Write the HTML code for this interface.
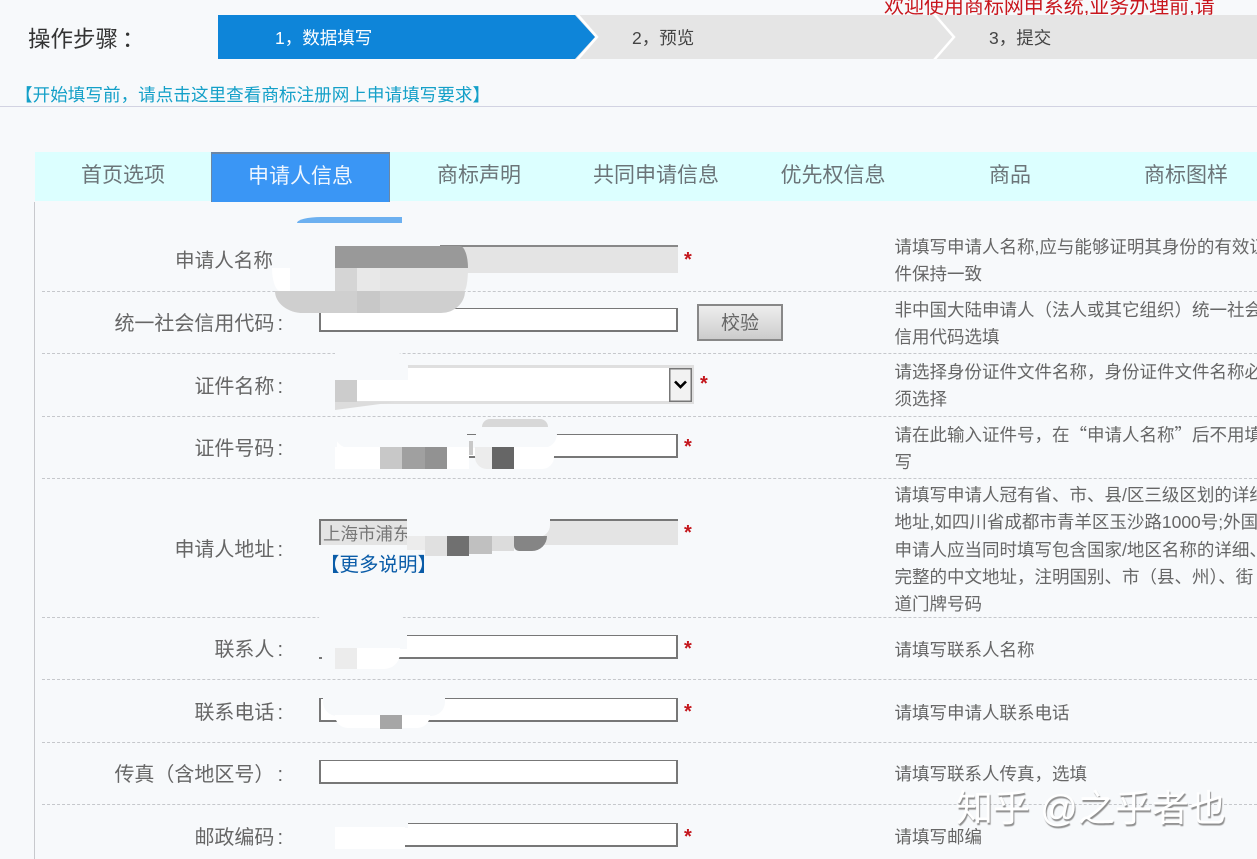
<!DOCTYPE html>
<html lang="zh-CN"><head><meta charset="utf-8"><title>商标网申</title>
<style>
html,body{margin:0;padding:0;width:1257px;height:859px;overflow:hidden;background:#f7f9fb}
body{position:relative;font-family:"Liberation Sans","Noto Sans CJK SC",sans-serif;color:#666}
.a,.t,.l,.h,.d,.i,.s{position:absolute}
.t,.l,.h{white-space:nowrap;height:30px;line-height:30px}
.l{right:974px;font-size:20px;color:#666;text-align:right}
.l span{margin-left:3px}
.h{left:894.5px;font-size:17.5px;color:#666}
.h span{font-family:"Noto Sans CJK SC",sans-serif}
.d{left:42px;width:1215px;height:0;border-top:1px dashed #c6c8cc}
.i{left:319px;width:355px;height:21px;background:#fff;border:2px solid #777;border-width:1px 2px 2px 2px}
.s{color:#c4161c;font-size:20px;line-height:20px;height:20px;font-weight:bold}
.tab{position:absolute;top:152px;height:50px;line-height:48px;font-size:21px;color:#6b7478;text-align:center;white-space:nowrap}
</style></head><body>

<div class="t" style="left:884px;top:-8px;font-size:20px;color:#c8161d;height:30px;letter-spacing:-.03px">欢迎使用商标网申系统,业务办理前,请</div>
<svg class="a" style="left:218px;top:15px" width="1039" height="44" viewBox="0 0 1039 44">
<rect x="340" width="699" height="44" fill="#e5e5e5"/>
<polygon points="0,0 357,0 377,22 357,44 0,44" fill="#0e85d9"/>
<polyline points="359,-1 379,22 359,45" fill="none" stroke="#fff" stroke-width="2.5"/>
<polyline points="716,-1 736,22 716,45" fill="none" stroke="#fff" stroke-width="2.5"/>
</svg>
<div class="t" style="left:28px;top:25px;font-size:22.5px;color:#333">操作步骤<span style="margin-left:4px">：</span></div>
<div class="t" style="left:275px;top:23px;font-size:17.5px;color:#fff">1，数据填写</div>
<div class="t" style="left:632px;top:23px;font-size:17.5px;color:#444">2，预览</div>
<div class="t" style="left:989px;top:23px;font-size:17.5px;color:#444">3，提交</div>
<div class="t" style="left:15px;top:80px;font-size:17.6px;color:#14a0c8">【开始填写前，请点击这里查看商标注册网上申请填写要求】</div>
<div class="a" style="left:0;top:106px;width:1257px;height:1px;background:#d2d3e2"></div>

<div class="a" style="left:35px;top:152px;width:1222px;height:49px;background:#dcffff"></div>
<div class="tab" style="left:35px;width:176px">首页选项</div>
<div class="tab" style="left:211px;width:179px;background:#3a96f5;color:#eef6ff;box-shadow:inset 0 2px 0 #6b87a5,inset 1px 0 0 #6b87a5,inset -1px 0 0 #6b87a5;line-height:49px">申请人信息</div>
<div class="tab" style="left:390px;width:178px">商标声明</div>
<div class="tab" style="left:568px;width:176px">共同申请信息</div>
<div class="tab" style="left:744px;width:178px">优先权信息</div>
<div class="tab" style="left:922px;width:176px">商品</div>
<div class="tab" style="left:1098px;width:176px">商标图样</div>
<div class="a" style="left:34px;top:202px;width:1px;height:657px;background:#c8c9cd"></div>

<div class="d" style="top:291px"></div><div class="d" style="top:353px"></div><div class="d" style="top:416px"></div><div class="d" style="top:478px"></div><div class="d" style="top:617px"></div><div class="d" style="top:679px"></div><div class="d" style="top:742px"></div><div class="d" style="top:804px"></div>

<div class="l" style="top:246px;right:984px;font-size:19.6px">申请人名称</div>
<div class="l" style="top:309px">统一社会信用代码<span>:</span></div>
<div class="l" style="top:372px">证件名称<span>:</span></div>
<div class="l" style="top:434px">证件号码<span>:</span></div>
<div class="l" style="top:535px">申请人地址<span>:</span></div>
<div class="l" style="top:635px">联系人<span>:</span></div>
<div class="l" style="top:698px">联系电话<span>:</span></div>
<div class="l" style="top:760px">传真（含地区号）<span>:</span></div>
<div class="l" style="top:823px">邮政编码<span>:</span></div>

<div class="h" style="top:232px">请填写申请人名称,应与能够证明其身份的有效证</div>
<div class="h" style="top:259px">件保持一致</div>
<div class="h" style="top:295px">非中国大陆申请人（法人或其它组织）统一社会</div>
<div class="h" style="top:322px">信用代码选填</div>
<div class="h" style="top:357px">请选择身份证件文件名称，身份证件文件名称必</div>
<div class="h" style="top:384px">须选择</div>
<div class="h" style="top:420px">请在此输入证件号，在<span>“</span>申请人名称<span>”</span>后不用填</div>
<div class="h" style="top:447px">写</div>
<div class="h" style="top:480px">请填写申请人冠有省、市、县/区三级区划的详细</div>
<div class="h" style="top:507px">地址,如四川省成都市青羊区玉沙路1000号;外国</div>
<div class="h" style="top:535px">申请人应当同时填写包含国家/地区名称的详细、</div>
<div class="h" style="top:562px">完整的中文地址，注明国别、市（县、州）、街</div>
<div class="h" style="top:589px">道门牌号码</div>
<div class="h" style="top:635px">请填写联系人名称</div>
<div class="h" style="top:698px">请填写申请人联系电话</div>
<div class="h" style="top:759px">请填写联系人传真，选填</div>
<div class="h" style="top:822px">请填写邮编</div>

<!-- row 1 -->
<div class="a" style="left:297px;top:217px;width:105px;height:6px;background:#6cb0f0;border-radius:24px 0 0 0/6px 0 0 0"></div>
<div class="a" style="left:440px;top:245px;width:238px;height:28px;background:#e4e4e4;border-top:2px solid #888;box-sizing:border-box"></div>
<div class="a" style="left:335px;top:246px;width:133px;height:22px;background:#999;border-radius:0 8px 0 0/0 22px 0 0"></div>
<div class="a" style="left:272px;top:268px;width:18px;height:23px;background:#fff;border-radius:0 0 0 8px/0 0 0 23px"></div>
<div class="a" style="left:335px;top:268px;width:22px;height:23px;background:#d5d5d5"></div>
<div class="a" style="left:357px;top:268px;width:23px;height:23px;background:#e8e8e8"></div>
<div class="a" style="left:380px;top:268px;width:88px;height:23px;background:#e4e4e4;border-radius:0 0 4px 0/0 0 23px 0"></div>

<!-- row 2 -->
<div class="i" style="top:308px"></div>
<div class="a" style="left:275px;top:291px;width:190px;height:22px;background:#cfcfcf;border-radius:0 0 24px 28px/0 0 22px 22px"></div>
<div class="a" style="left:357px;top:291px;width:23px;height:22px;background:#c8c8c8"></div>
<div class="a" style="left:697px;top:304px;width:86px;height:37px;box-sizing:border-box;border:2px solid #888;background:linear-gradient(#eeeeee,#cccccc);text-align:center;line-height:36px;font-size:19px;color:#666">校验</div>
<div class="s" style="left:684px;top:250px">*</div>

<!-- row 3 -->
<div class="a" style="left:335px;top:365px;width:359px;height:39px;box-sizing:border-box;background:#fff;border:3px solid #dfdfdf;border-left:0"></div>
<div class="a" style="left:335px;top:352px;width:73px;height:28px;background:#f7f9fb;border-radius:0 14px 0 0"></div>
<div class="a" style="left:335px;top:380px;width:22px;height:22px;background:#ccc"></div>
<svg class="a" style="left:669px;top:368px" width="23" height="34" viewBox="0 0 23 34"><rect x=".75" y=".75" width="21.5" height="32.5" fill="#f2f2f2" stroke="#777" stroke-width="1.5"/><polyline points="6,13.5 11.5,19 17,13.5" fill="none" stroke="#000" stroke-width="2.6"/></svg>
<div class="a" style="left:335px;top:402px;width:60px;height:8px;background:#dcdcdc;clip-path:polygon(0 0,100% 0,0 100%)"></div>
<div class="s" style="left:700px;top:374px">*</div>

<!-- row 4 -->
<div class="i" style="top:434px"></div>
<div class="a" style="left:315px;top:430px;width:22px;height:32px;background:#f7f9fb"></div>
<div class="a" style="left:335px;top:418px;width:222px;height:30px;background:#f7f9fb;border-radius:14px"></div>
<div class="a" style="left:467px;top:434px;width:9px;height:1px;background:#777"></div>
<div class="a" style="left:469px;top:441px;width:4px;height:14px;background:#c8c8c8"></div>
<div class="a" style="left:335px;top:447px;width:45px;height:22px;background:#fff"></div>
<div class="a" style="left:380px;top:447px;width:22px;height:22px;background:#c8c8c8"></div>
<div class="a" style="left:402px;top:447px;width:23px;height:22px;background:#a0a0a0"></div>
<div class="a" style="left:425px;top:447px;width:22px;height:22px;background:#929292"></div>
<div class="a" style="left:447px;top:447px;width:22px;height:22px;background:#fff"></div>
<div class="a" style="left:475px;top:447px;width:17px;height:22px;background:#ececec;border-radius:0 0 0 12px"></div>
<div class="a" style="left:492px;top:447px;width:22px;height:22px;background:#666"></div>
<div class="a" style="left:514px;top:447px;width:40px;height:22px;background:#fff;border-radius:0 0 12px 0"></div>
<div class="a" style="left:482px;top:419px;width:66px;height:8px;background:#d8d8d8;border-radius:12px 12px 0 0"></div>
<div class="s" style="left:684px;top:437px">*</div>

<!-- row 5 -->
<div class="a" style="left:319px;top:519px;width:359px;height:26px;box-sizing:border-box;background:#e4e4e4;border-top:2px solid #777;border-left:2px solid #777;font-size:17.5px;line-height:26px;padding-left:2px;color:#777;white-space:nowrap">上海市浦东</div>
<div class="t" style="left:320px;top:550px;font-size:19.5px;color:#0a5ca8">【更多说明】</div>
<div class="a" style="left:407px;top:490px;width:143px;height:47px;background:#f7f9fb;border-radius:0 0 12px 0"></div>
<div class="a" style="left:407px;top:536px;width:18px;height:14px;background:#ececec"></div>
<div class="a" style="left:425px;top:536px;width:22px;height:20px;background:#e0e0e0"></div>
<div class="a" style="left:447px;top:536px;width:22px;height:20px;background:#707070"></div>
<div class="a" style="left:469px;top:536px;width:23px;height:18px;background:#c0c0c0"></div>
<div class="a" style="left:492px;top:536px;width:22px;height:15px;background:#dcdcdc"></div>
<div class="a" style="left:514px;top:536px;width:33px;height:15px;background:#858585;border-radius:0 0 18px 6px"></div>
<div class="s" style="left:684px;top:523px">*</div>

<!-- row 6 -->
<div class="i" style="top:635px"></div>
<div class="a" style="left:315px;top:612px;width:92px;height:37px;background:#f7f9fb;border-radius:16px 16px 0 0"></div>
<div class="a" style="left:315px;top:645px;width:20px;height:12px;background:#f7f9fb"></div>
<div class="a" style="left:322px;top:655px;width:13px;height:8px;background:#f7f9fb"></div>
<div class="a" style="left:335px;top:648px;width:22px;height:21px;background:#ececec"></div>
<div class="a" style="left:357px;top:648px;width:43px;height:21px;background:#fff;border-radius:0 0 16px 0"></div>
<div class="s" style="left:684px;top:639px">*</div>

<!-- row 7 -->
<div class="i" style="top:698px"></div>
<div class="a" style="left:323px;top:680px;width:122px;height:36px;background:#f7f9fb;border-radius:0 0 14px 14px"></div>
<div class="a" style="left:335px;top:715px;width:95px;height:13px;background:#fff;border-radius:0 0 40px 40px"></div>
<div class="a" style="left:380px;top:715px;width:22px;height:14px;background:#a6a6a6"></div>
<div class="s" style="left:684px;top:702px">*</div>

<!-- row 8 -->
<div class="i" style="top:760px"></div>

<!-- row 9 -->
<div class="i" style="top:823px"></div>
<div class="a" style="left:310px;top:805px;width:98px;height:23px;background:#f7f9fb;border-radius:16px 16px 0 0"></div>
<div class="a" style="left:310px;top:820px;width:26px;height:32px;background:#f7f9fb"></div>
<div class="a" style="left:335px;top:827px;width:70px;height:22px;background:#fff"></div>
<div class="s" style="left:684px;top:827px">*</div>

<div class="t" style="left:956px;top:786px;height:46px;line-height:46px;font-size:37px;color:#fff;text-shadow:1px 2px 1px #8e8e8e">知乎 @之乎者也</div>
</body></html>
